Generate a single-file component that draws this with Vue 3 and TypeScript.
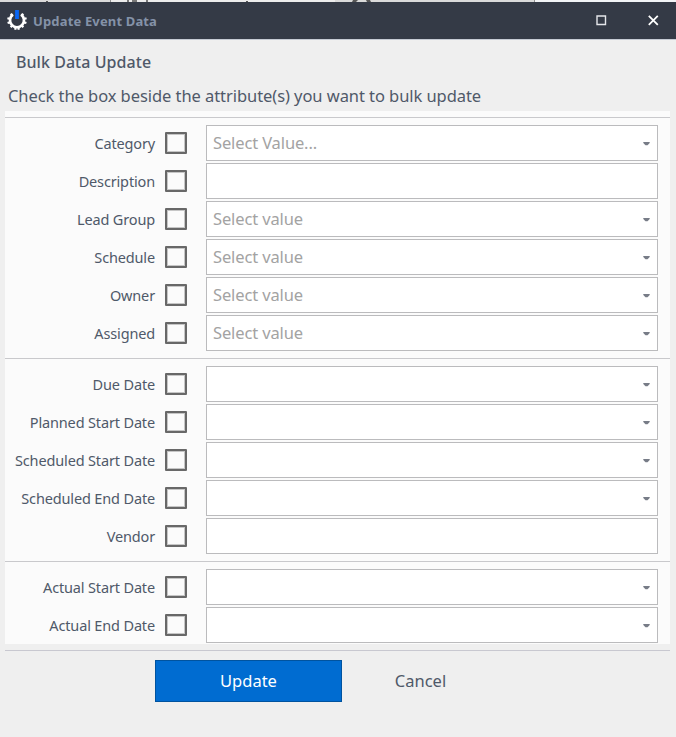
<script setup lang="ts">
interface Field {
  label: string
  kind: 'select' | 'text'
  placeholder?: string
}

const groups: Field[][] = [
  [
    { label: 'Category', kind: 'select', placeholder: 'Select Value...' },
    { label: 'Description', kind: 'text' },
    { label: 'Lead Group', kind: 'select', placeholder: 'Select value' },
    { label: 'Schedule', kind: 'select', placeholder: 'Select value' },
    { label: 'Owner', kind: 'select', placeholder: 'Select value' },
    { label: 'Assigned', kind: 'select', placeholder: 'Select value' },
  ],
  [
    { label: 'Due Date', kind: 'select' },
    { label: 'Planned Start Date', kind: 'select' },
    { label: 'Scheduled Start Date', kind: 'select' },
    { label: 'Scheduled End Date', kind: 'select' },
    { label: 'Vendor', kind: 'text' },
  ],
  [
    { label: 'Actual Start Date', kind: 'select' },
    { label: 'Actual End Date', kind: 'select' },
  ],
]
</script>

<template>
  <div class="window">
    <svg class="backdrop" width="676" height="2" viewBox="0 0 676 2">
      <path fill="#dadada" d="M0 0h535v2H0z" />
      <path fill="#ececec" d="M111 0h224v2H111z" />
      <path fill="#f2f4f6" d="M535 0h141v2H535z" />
      <path fill="#8f8f8f" d="M110 0h1v2h-1zM534 0h1v2h-1z" />
      <path fill="#777" d="M127 0h2v2h-2zM132 0h5v2h-5zM146 0h2v2h-2z" />
      <path fill="#555" d="M46 1h2v1h-2zM246 1h2v1h-2zM353 0h5l-2 2h-4zM366 0h4l1 2h-4z" />
    </svg>
    <header class="titlebar">
      <svg class="logo" width="20" height="20" viewBox="0 0 20 20">
        <path d="M5.9 4.6A7 7 0 1 0 14.1 4.6" fill="none" stroke="#fff" stroke-width="2.7" />
        <path
          d="M3.7 3.7l2 2.1M.4 8.2l3 .7M.6 13l2.9-.9M3.7 17.3l2-2.3M8.2 19.7l.5-2.8M11.8 19.7l-.5-2.8M16.3 17.3l-2-2.3M19.4 13l-2.9-.9M19.6 8.2l-3 .7M16.3 3.7l-2 2.1"
          stroke="#fff"
          stroke-width="2.2"
        />
        <path d="M8.1 0h3.8v9H8.1z" fill="#0866f5" />
      </svg>
      <span class="title">Update Event Data</span>
      <svg class="control" width="11" height="11" viewBox="0 0 11 11">
        <path d="M1 1h8.5v8.5H1z" fill="none" stroke="#e4e6ea" stroke-width="1.4" />
      </svg>
      <svg class="control" width="11" height="11" viewBox="0 0 11 11">
        <path d="M.8.8l9 9M9.8.8l-9 9" stroke="#fff" stroke-width="1.8" />
      </svg>
    </header>

    <h1 class="heading">Bulk Data Update</h1>
    <p class="intro">Check the box beside the attribute(s) you want to bulk update</p>

    <main class="panel">
      <section v-for="(group, g) in groups" :key="g" class="group">
        <div v-for="field in group" :key="field.label" class="row">
          <span class="label">{{ field.label }}</span>
          <span class="checkbox"></span>
          <div class="input">
            <span class="placeholder">{{ field.placeholder }}</span>
            <svg v-if="field.kind === 'select'" class="arrow" width="7" height="4" viewBox="0 0 7 4">
              <path d="M.3 0h6.4v1L4.5 3.2h-2L.3 1z" fill="#777c87" />
            </svg>
          </div>
        </div>
      </section>
    </main>

    <footer class="actions">
      <button class="update" type="button">Update</button>
      <button class="cancel" type="button">Cancel</button>
    </footer>
  </div>
</template>

<style>
body {
  margin: 0;
  background: #efefef;
}
</style>

<style scoped>
.window {
  box-sizing: border-box;
  width: 676px;
  height: 737px;
  overflow: hidden;
  background: #efefef;
  color: #4f5969;
  font-family: 'Noto Sans', 'Open Sans', sans-serif;
}
.backdrop {
  display: block;
}
.titlebar {
  box-sizing: border-box;
  display: flex;
  align-items: center;
  height: 38px;
  padding: 0 17px 1px 7px;
  background: #343a46;
  border-bottom: 1px solid #c5cad3;
}
.title {
  flex: 1;
  margin-left: 6px;
  padding-top: 1px;
  color: #8492a8;
  font-size: 13px;
  font-weight: 700;
  letter-spacing: 0.15px;
  line-height: 20px;
}
.control + .control {
  margin-left: 41px;
}
.heading {
  height: 24px;
  margin: 10px 0 0 16px;
  font-size: 16px;
  font-weight: 500;
  letter-spacing: 0.05px;
  line-height: 24px;
  white-space: nowrap;
}
.intro {
  height: 24px;
  margin: 10px 0 0 8px;
  font-size: 16.5px;
  letter-spacing: -0.065px;
  line-height: 24px;
  white-space: nowrap;
}
.panel {
  box-sizing: border-box;
  width: 665px;
  height: 533px;
  margin: 3px 0 0 5px;
  padding-top: 6px;
  background: #fbfbfb;
}
.group {
  display: flex;
  flex-direction: column;
  gap: 2px;
  padding: 7px 12px 7px 0;
  border-top: 1px solid #c9c9cc;
}
.group:last-child {
  padding-bottom: 0;
}
.row {
  display: flex;
  align-items: center;
  height: 36px;
}
.label {
  width: 150px;
  font-size: 14.5px;
  letter-spacing: -0.15px;
  line-height: 20px;
  text-align: right;
  white-space: nowrap;
}
.checkbox {
  box-sizing: border-box;
  width: 22px;
  height: 22px;
  margin: 0 19px 0 10px;
  border: 2px solid #686868;
  border-radius: 1px;
  box-shadow: inset 0 0 0 1px #c6c6c6;
}
.input {
  box-sizing: border-box;
  flex: 1;
  display: flex;
  align-items: center;
  justify-content: space-between;
  height: 36px;
  padding: 0 7px 0 6px;
  background: #fff;
  border: 1px solid #bbbbbd;
}
.placeholder {
  color: #a3a3a3;
  font-size: 16.5px;
  letter-spacing: -0.13px;
  line-height: 24px;
}
.arrow {
  margin-top: 2px;
}
.actions {
  box-sizing: border-box;
  display: flex;
  width: 665px;
  margin: 6px 0 0 5px;
  padding: 9px 0 0 150px;
  border-top: 1px solid #c8c8d0;
}
.update,
.cancel {
  box-sizing: border-box;
  height: 42px;
  padding: 0 0 2px;
  font-family: inherit;
  font-size: 16.5px;
}
.update {
  width: 187px;
  color: #fff;
  background: #006cd1;
  border: 1px solid #00539f;
}
.cancel {
  width: 157px;
  color: #4f5969;
  background: none;
  border: 0;
}
</style>
